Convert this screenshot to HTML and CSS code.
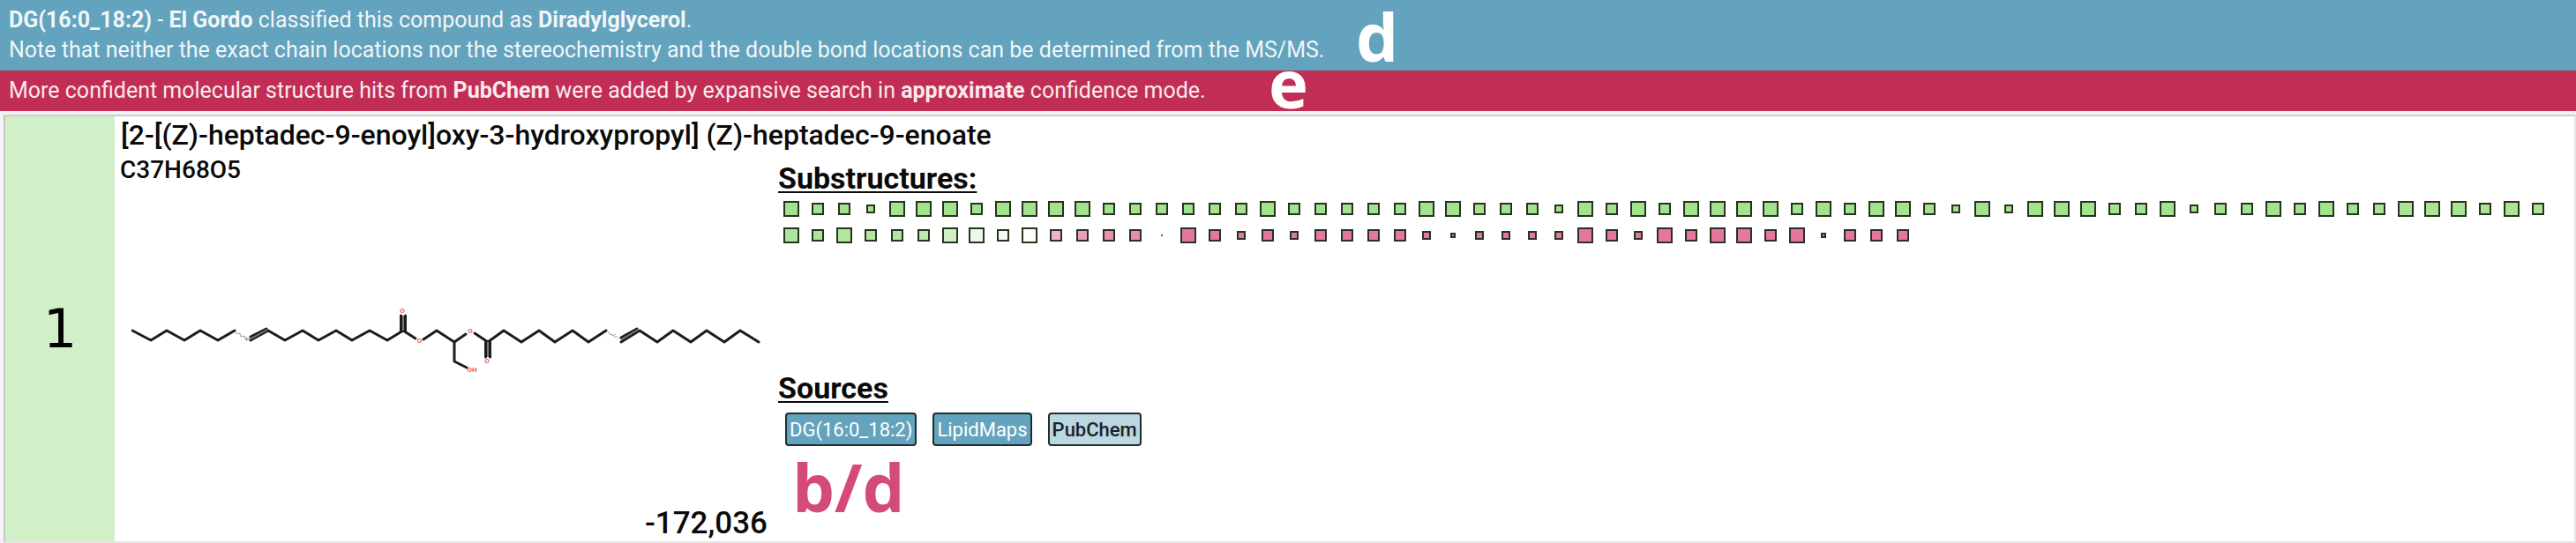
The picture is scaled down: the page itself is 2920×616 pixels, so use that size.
FILE: index.html
```html
<!DOCTYPE html>
<html lang="en">
<head>
<meta charset="utf-8">
<title>Structure candidates</title>
<link rel="stylesheet" href="styles.css">
</head>
<body>
<section class="banner banner-lipid">
  <p><b>DG(16:0_18:2)</b> - <b>El Gordo</b> classified this compound as <b>Diradylglycerol</b>.</p>
  <p>Note that neither the exact chain locations nor the stereochemistry and the double bond locations can be determined from the MS/MS.</p>
  <span class="mark mark-d">d</span>
</section>
<section class="banner banner-expansive">
  <p>More confident molecular structure hits from <b>PubChem</b> were added by expansive search in <b>approximate</b> confidence mode.</p>
  <span class="mark mark-e">e</span>
</section>
<main class="candidate">
  <div class="rank">1</div>
  <div class="content">
    <h1 class="name">[2-[(Z)-heptadec-9-enoyl]oxy-3-hydroxypropyl] (Z)-heptadec-9-enoate</h1>
    <section class="structure">
      <p class="formula">C37H68O5</p>
      <svg class="molecule" viewBox="149 348 714 78" role="img" aria-label="Molecular structure">
        <g class="bond">
          <path d="M150 376L171 387L189 376L209 387L227 376L247 387L266 376"/>
          <path d="M284 387L304 376L323 387L343 376L361 387L381 376L399 387L419 376L439 387L457 376L471 385M284 383L302 374"/>
          <path d="M454.500 376V359M459.500 376V359"/>
          <path d="M480 386L495 376L515 389L528 380M515 389V411L529 418"/>
          <path d="M538 379L553 389L571 376L591 389L611 376L629 389L649 376L667 389L687 376"/>
          <path d="M550.500 389V406M555.500 389V406"/>
          <path d="M704 389L725 376L745 389L763 376L783 389L801 376L821 389L839 376L860 389M704 384L722 374"/>
        </g>
        <g class="bond-inner">
          <path d="M457 376V359M553 389V406M285 385L303 375M704 386.500L723 375"/>
        </g>
        <g class="wave">
          <path d="M267 377l2 3l3-1l1 4l4-1l1 4l3 0"/>
          <path d="M689 377l3 4l2-1l1 2l3-2M696 383l4 0M701 386l2-2"/>
        </g>
        <g class="atom">
          <text x="456" y="356">O</text>
          <text x="475.500" y="390">O</text>
          <text x="533" y="379">O</text>
          <text x="552" y="413">O</text>
          <text x="535" y="423">OH</text>
        </g>
        <text class="hydrogen" x="281" y="388">H</text>
      </svg>
      <p class="score">-172,036</p>
    </section>
    <section class="details">
      <h2>Substructures:</h2>
      <ul class="fragments" id="fragments"></ul>
      <h2>Sources</h2>
      <div class="sources">
        <button type="button" class="source">DG(16:0_18:2)</button>
        <button type="button" class="source">LipidMaps</button>
        <button type="button" class="source source-light">PubChem</button>
        <span class="mark mark-bd">b/d</span>
      </div>
    </section>
  </div>
</main>
<script src="script.js"></script>
</body>
</html>
```

FILE: styles.css
```css
* { box-sizing: border-box; margin: 0; padding: 0; }

body {
  display: flex;
  flex-direction: column;
  min-height: 100vh;
  background: #f4f4f4;
  color: #0a0a0a;
  font-family: Roboto, "Liberation Sans", sans-serif;
}

.banner {
  position: relative;
  padding: 6px 10px;
  color: #fff;
  font-size: 25px;
  line-height: 34px;
}
.banner p { opacity: 0.9; }
.banner-lipid { background: #64a3bd; }
.banner-expansive { background: #c22d55; }

.mark {
  position: absolute;
  z-index: 1;
  font-family: "Open Sans", "Noto Sans", sans-serif;
  font-size: 76px;
  font-weight: 700;
  line-height: 76px;
}
.mark-d { left: 1537px; top: 3px; }
.mark-e { left: 1438px; top: -24px; }
.mark-bd { left: 16px; top: 56px; color: #d44a7a; }

.candidate {
  flex: 1;
  display: flex;
  margin: 4px 0 0 4px;
  border: 2px solid #e6e6e6;
  border-top-color: #cfcfcf;
  border-left-color: #c6c6c6;
  background: #fff;
}
.rank {
  display: flex;
  align-items: center;
  justify-content: center;
  width: 124px;
  background: #d2f0c8;
  color: #000;
  font-family: "DejaVu Sans", sans-serif;
  font-size: 60px;
}
.content {
  flex: 1;
  display: grid;
  grid-template-columns: 752px 1fr;
  grid-template-rows: 42px 1fr;
}
.name {
  grid-column: 1 / -1;
  padding-left: 7px;
  font-size: 32px;
  font-weight: 500;
  line-height: 42px;
}

.structure {
  display: flex;
  flex-direction: column;
  justify-content: space-between;
}
.formula {
  padding-left: 6px;
  font-size: 28px;
  font-weight: 500;
  line-height: 38px;
}
.molecule { width: 714px; align-self: center; margin-bottom: 14px; }
.bond { fill: none; stroke: #1c1c1c; stroke-width: 3; stroke-linecap: round; stroke-linejoin: round; }
.bond-inner { fill: none; stroke: #777; stroke-width: 2; }
.wave { fill: none; stroke: #999; stroke-width: 1; }
.atom { fill: #f25555; font-size: 8px; font-weight: 700; text-anchor: middle; }
.hydrogen { fill: #777; font-size: 7px; text-anchor: middle; }
.score {
  padding-right: 12px;
  font-size: 35px;
  font-weight: 500;
  line-height: 40px;
  text-align: right;
}

.details { padding-top: 10px; }
.details h2 {
  font-size: 34px;
  font-weight: 700;
  line-height: 36px;
  text-decoration: underline;
  text-decoration-thickness: 2px;
  text-underline-offset: 3px;
}
.fragments {
  display: flex;
  flex-wrap: wrap;
  align-content: flex-start;
  min-height: 202px;
  padding-top: 2px;
  list-style: none;
}
.fragments li {
  display: flex;
  align-items: center;
  justify-content: center;
  width: 30px;
  height: 30px;
}
.fragment { border: 2px solid #26331f; }
.size-l { width: 18px; height: 18px; }
.size-m { width: 14px; height: 14px; }
.size-s { width: 10px; height: 10px; }
.size-t { width: 6px; height: 6px; }
.size-d { width: 2px; height: 2px; border-width: 1px; border-color: #555; }

.sources {
  position: relative;
  display: flex;
  gap: 18px;
  padding: 10px 8px;
}
.source {
  height: 38px;
  padding: 0 3px;
  border: 2px solid #1f2d33;
  border-radius: 4px;
  background: #64a3bd;
  color: #fff;
  font-family: inherit;
  font-size: 22px;
  font-weight: 400;
}
.source-light { background: #bbd7e2; color: #1a2226; font-weight: 500; }
```

FILE: script.js
```js
const rows = [
  "LMMSLLLMLLLLMMMMMMLMMMMMLLMMMSLMLMLLLLMLMLLMSLSLLLMMLSMMLMLMMLLLMLM",
  "LMLMMMLLMLMMMMDLMSMSMMMMSTSSSSLMSLMLLMLTMMM"
];
const fade = ["#aee59c", "#aee59c", "#b0e69f", "#b2e6a1", "#b4e7a4", "#b9e9ab", "#d0efc6",
  "#edf8e8", "#f3faf0", "#fdfefa", "#f0b3c8", "#ec9dba", "#e98fb0", "#e98bae"];

const list = document.getElementById("fragments");
rows.forEach((row, r) => {
  [...row].forEach((size, i) => {
    const item = document.createElement("li");
    const square = document.createElement("span");
    square.className = "fragment size-" + size.toLowerCase();
    square.style.backgroundColor = r === 0 ? (i < 60 ? "#a3e28e" : "#abe498") : (fade[i] || "#e6769f");
    item.append(square);
    list.append(item);
  });
});
```
